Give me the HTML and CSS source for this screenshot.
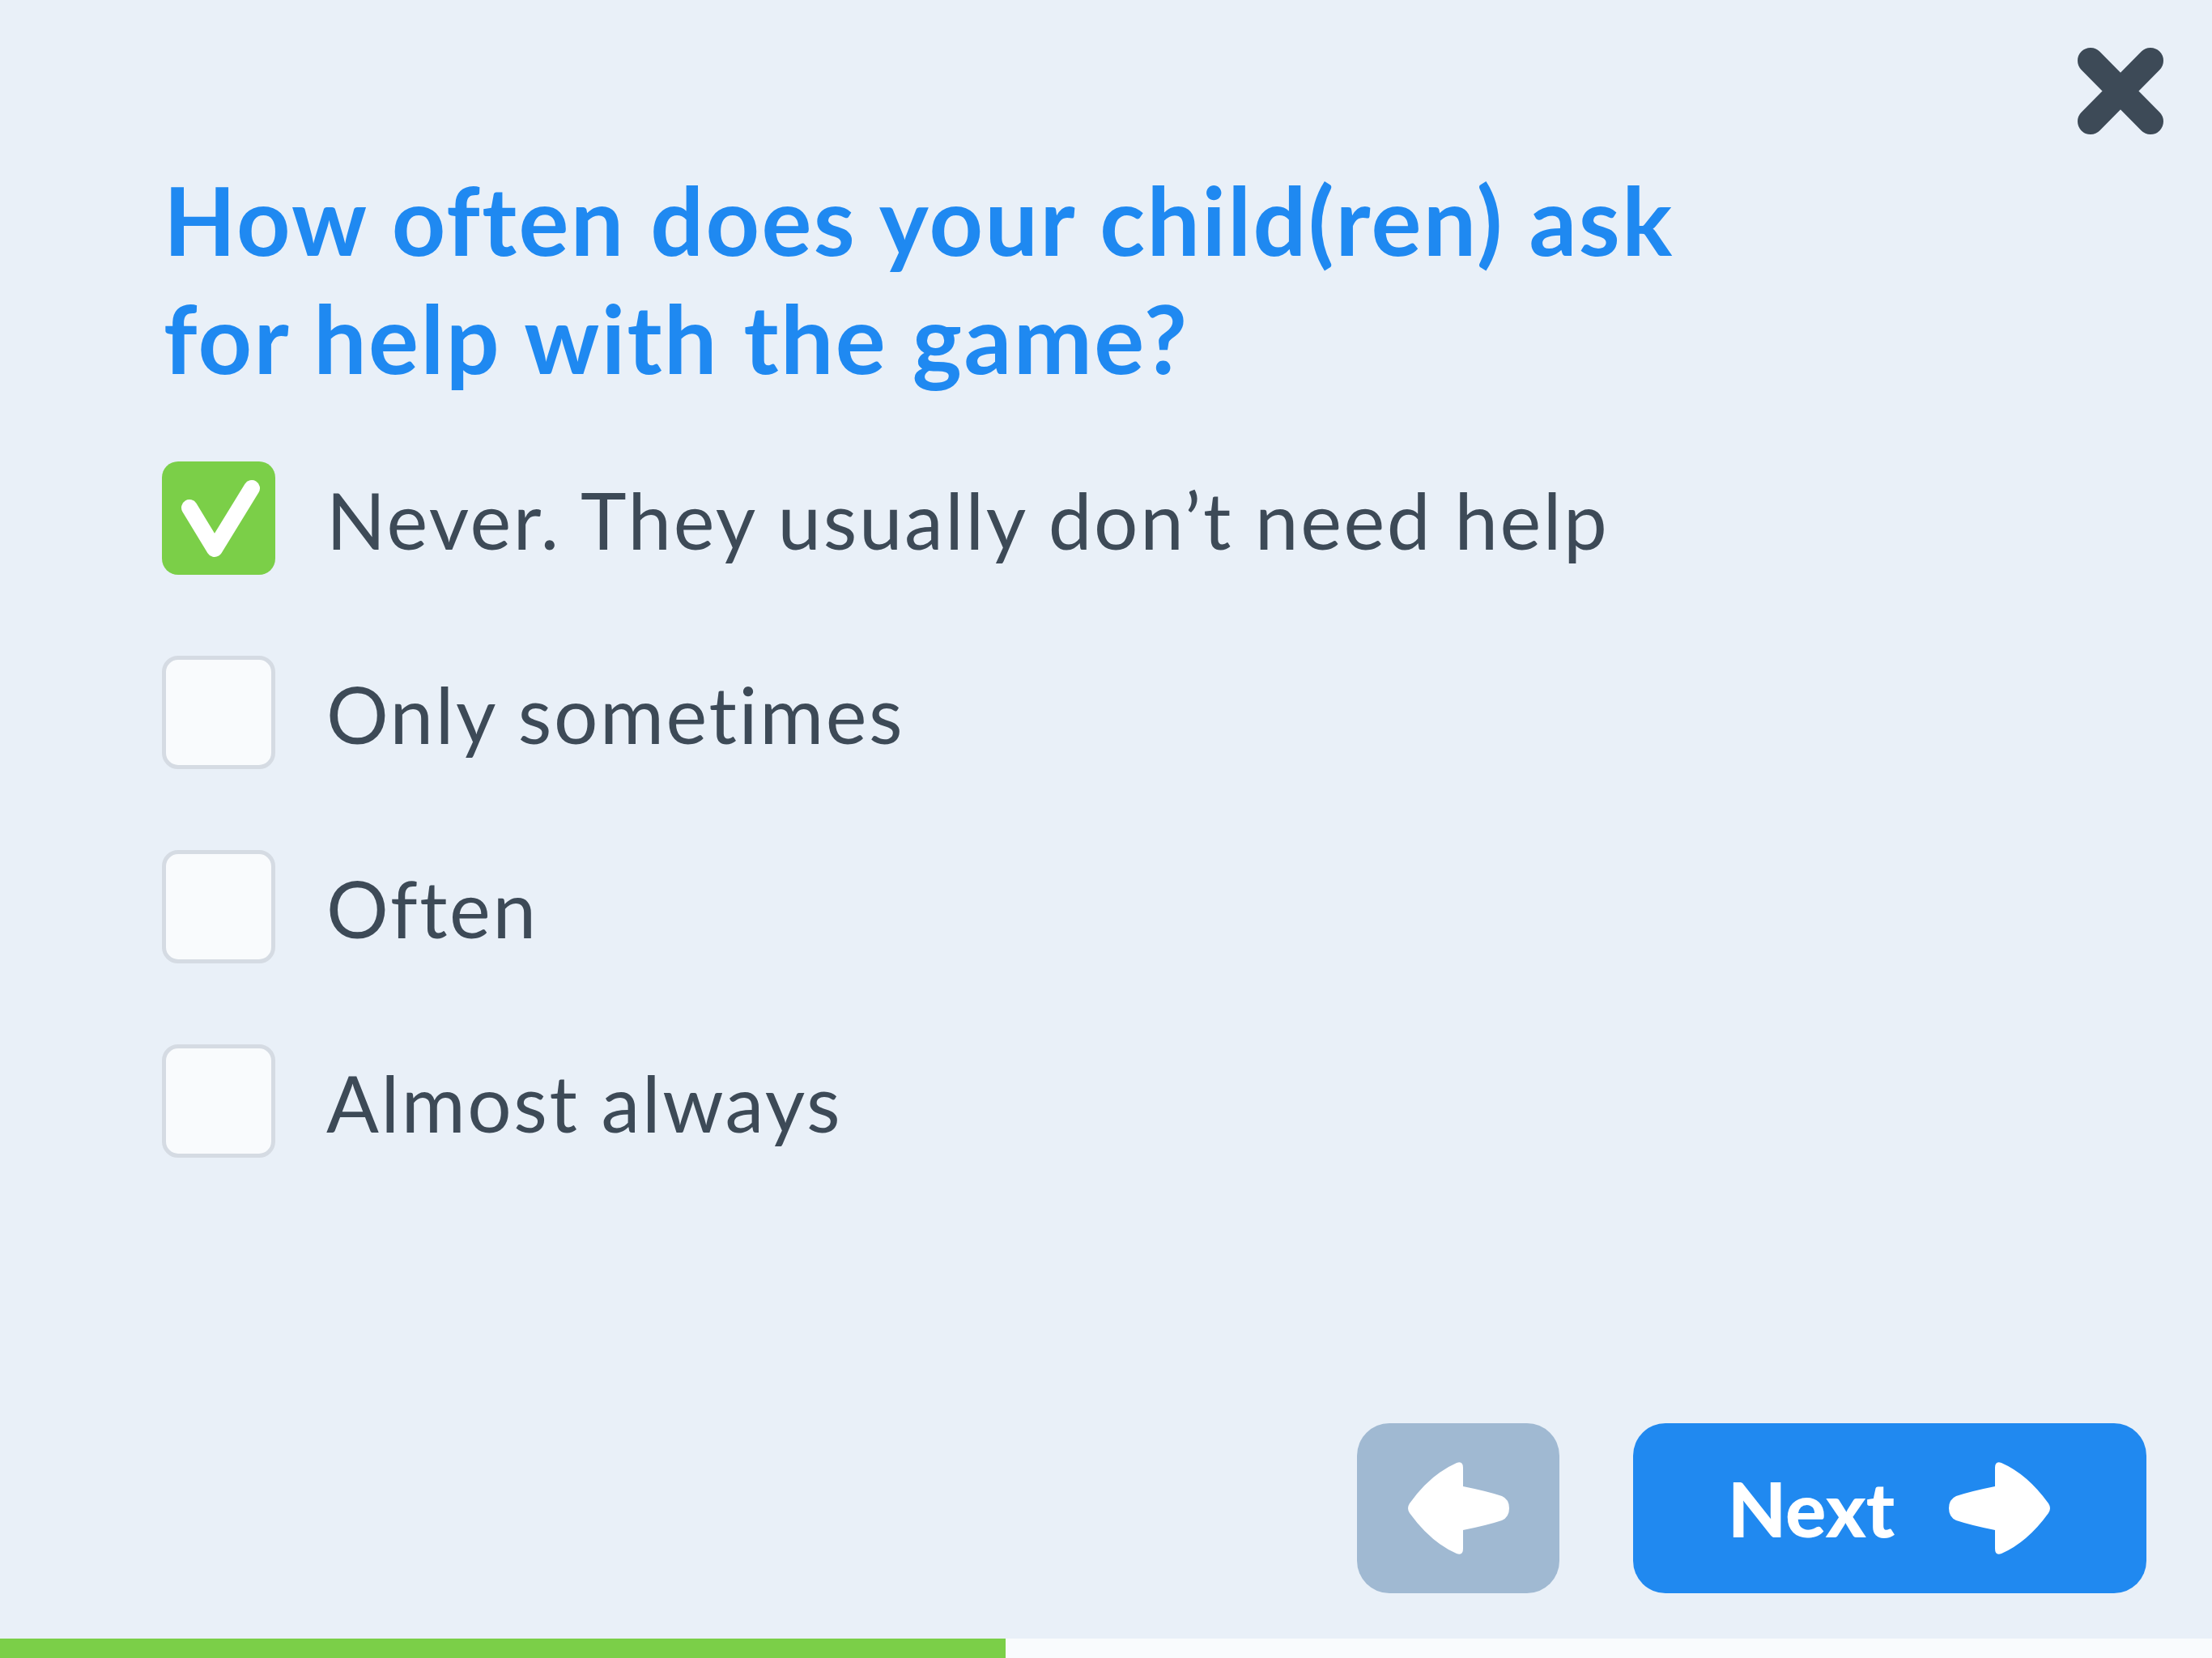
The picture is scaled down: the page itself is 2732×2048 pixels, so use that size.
FILE: index.html
```html
<!DOCTYPE html>
<html lang="en">
<head>
<meta charset="utf-8">
<title>Survey</title>
<link rel="stylesheet" href="styles.css">
</head>
<body>
<div class="page">
  <header class="topbar">
    <button class="close" aria-label="Close">
      <svg width="106" height="107" viewBox="0 0 106 107"><path d="M16 16 L90 91 M90 16 L16 91" stroke="#3d4a57" stroke-width="32" stroke-linecap="round" fill="none"/></svg>
    </button>
  </header>
  <main class="content">
    <h1 class="question">How often does your child(ren) ask<br>for help with the game?</h1>
    <ul class="options">
      <li class="option">
        <span class="box checked">
          <svg width="140" height="140" viewBox="0 0 140 140"><polyline points="34,57 65,108 111,33" stroke="#fff" stroke-width="20" stroke-linecap="round" stroke-linejoin="round" fill="none"/></svg>
        </span>
        <span class="label">Never. They usually don’t need help</span>
      </li>
      <li class="option"><span class="box"></span><span class="label">Only sometimes</span></li>
      <li class="option"><span class="box"></span><span class="label">Often</span></li>
      <li class="option"><span class="box"></span><span class="label">Almost always</span></li>
    </ul>
  </main>
  <footer class="actions">
    <button class="btn back" aria-label="Back">
      <svg width="128" height="116" viewBox="0 0 128 116"><path d="M4 52 Q30 16 62 2 Q70 -1 70 8 L70 31 Q100 37 118 43 Q127 47 127 58 Q127 69 118 73 Q100 79 70 85 L70 108 Q70 117 62 114 Q30 100 4 64 Q0 58 4 52 Z" fill="#fff"/></svg>
    </button>
    <button class="btn next">
      <span class="next-text">Next</span>
      <svg width="128" height="116" viewBox="0 0 128 116"><g transform="translate(128 0) scale(-1 1)"><path d="M4 52 Q30 16 62 2 Q70 -1 70 8 L70 31 Q100 37 118 43 Q127 47 127 58 Q127 69 118 73 Q100 79 70 85 L70 108 Q70 117 62 114 Q30 100 4 64 Q0 58 4 52 Z" fill="#fff"/></g></svg>
    </button>
  </footer>
  <div class="progress"><div class="progress-fill"></div></div>
</div>
</body>
</html>
```
FILE: styles.css
```css
* { box-sizing: border-box; }
html, body { margin: 0; padding: 0; }
body {
  background: #e9f0f8;
  font-family: Lato, "Open Sans", sans-serif;
  font-variant-ligatures: none;
}
.page {
  width: 2732px;
  height: 2048px;
  display: flex;
  flex-direction: column;
  background: #e9f0f8;
  overflow: hidden;
}
.topbar {
  display: flex;
  justify-content: flex-end;
  padding: 59px 60px 0 0;
  height: 199px;
}
.close {
  border: 0;
  background: none;
  padding: 0;
  width: 106px;
  height: 107px;
  display: block;
}
.close svg { display: block; }
.content { padding-left: 200px; }
.question {
  margin: 0 0 0 2px;
  color: #1f89f1;
  font-weight: 700;
  font-size: 116px;
  line-height: 146px;
  letter-spacing: 2.4px;
}
.options {
  list-style: none;
  margin: 79px 0 0 0;
  padding: 0;
  display: flex;
  flex-direction: column;
  gap: 100px;
}
.option {
  display: flex;
  align-items: center;
  gap: 63px;
  height: 140px;
}
.box {
  width: 140px;
  height: 140px;
  border-radius: 20px;
  border: 5px solid #d5dbe3;
  background: #f9fbfd;
  flex: none;
}
.box.checked {
  background: #7bcf48;
  border: 0;
}
.box svg { display: block; }
.label {
  color: #3d4a57;
  font-size: 96px;
  font-weight: 400;
  line-height: 1;
  padding-top: 4px;
  letter-spacing: 2.6px;
}
.actions {
  margin-top: auto;
  display: flex;
  justify-content: flex-end;
  gap: 91px;
  padding: 0 81px 56px 0;
}
.btn {
  border: 0;
  border-radius: 40px;
  height: 210px;
  display: flex;
  align-items: center;
  justify-content: center;
  padding: 0;
}
.btn svg { display: block; }
.back {
  width: 250px;
  background: #a0b9d2;
}
.next {
  width: 634px;
  background: #2089f0;
  gap: 66px;
}
.next-text {
  color: #fff;
  font-family: Lato, sans-serif;
  font-weight: 900;
  font-size: 94px;
  line-height: 1;
}
.progress {
  height: 24px;
  background: #f9fbfd;
  flex: none;
}
.progress-fill {
  width: 1242px;
  height: 100%;
  background: #7bcf48;
}
```
